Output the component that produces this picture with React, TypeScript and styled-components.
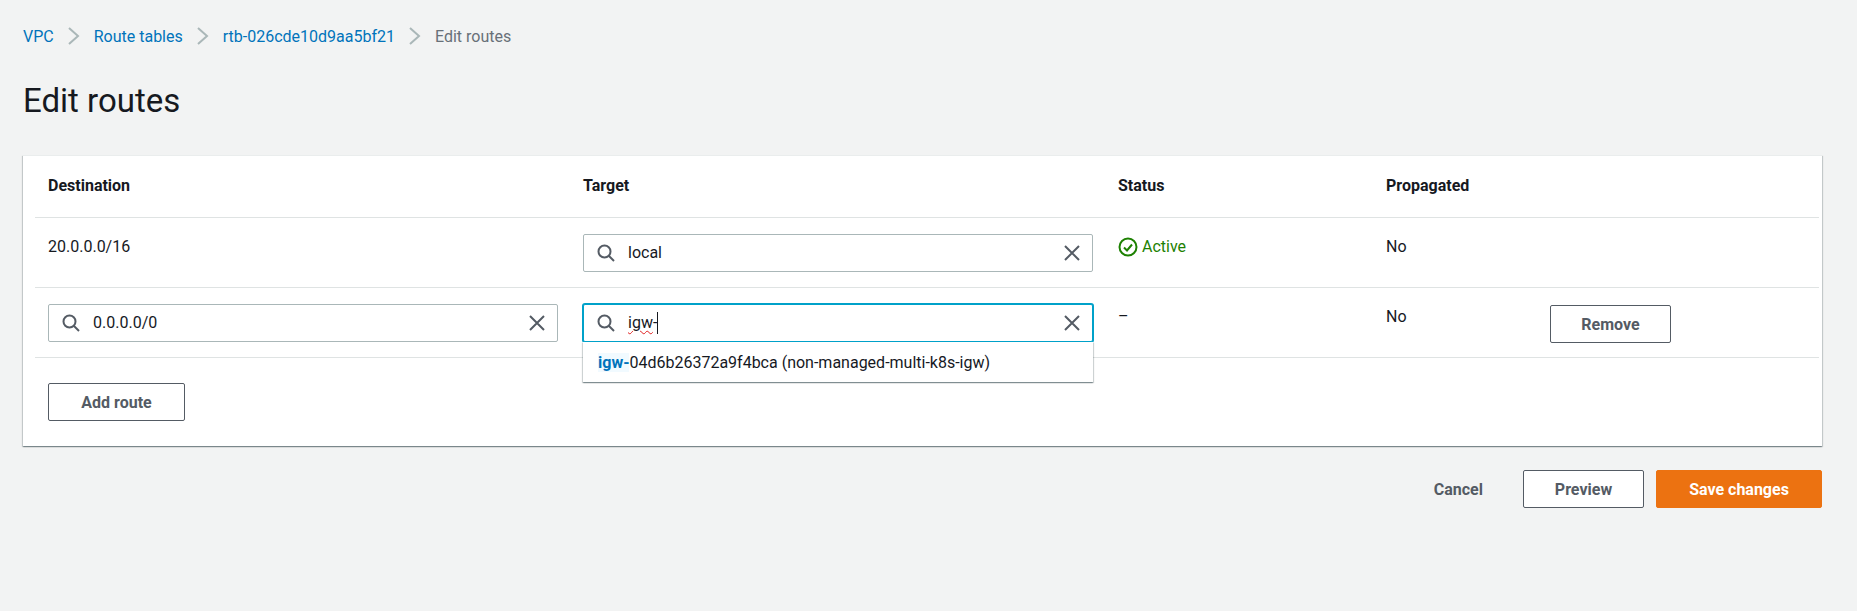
import styled, { createGlobalStyle } from 'styled-components';

const GlobalStyle = createGlobalStyle`
  html, body {
    margin: 0;
    padding: 0;
    background: #f2f3f3;
    color: #16191f;
    font-family: Roboto, "Liberation Sans", sans-serif;
    font-size: 16px;
  }
`;

const Page = styled.div`
  height: 611px;
  padding: 0 35px 0 23px;
  box-sizing: border-box;
  overflow: hidden;
`;

const Crumbs = styled.nav`
  display: flex;
  align-items: center;
  height: 22px;
  padding-top: 25px;
  font-size: 16px;
`;

const CrumbLink = styled.a`
  color: #0073bb;
`;

const CrumbCurrent = styled.span`
  color: #687078;
`;

const CrumbSep = styled.svg`
  width: 16px;
  height: 20px;
  margin: 0 12px;
  fill: none;
  stroke: #aab7b8;
  stroke-width: 2;
`;

const Title = styled.h1`
  margin: 28px 0 0;
  height: 56px;
  font-size: 33px;
  line-height: 52px;
  font-weight: 400;
  color: #16191f;
`;

const Panel = styled.section`
  margin-top: 24px;
  height: 291px;
  padding: 0 3px 0 12px;
  box-sizing: border-box;
  background: #fff;
  border-top: 1px solid #eaeded;
  box-shadow: 0 1px 1px 0 rgba(0, 28, 36, 0.3), 1px 1px 1px 0 rgba(0, 28, 36, 0.15),
    -1px 1px 1px 0 rgba(0, 28, 36, 0.15);
`;

const Row = styled.div<{ $height: number }>`
  display: grid;
  grid-template-columns: 535px 535px 268px 177px 1fr;
  height: ${(p) => p.$height}px;
  box-sizing: border-box;
  border-bottom: 1px solid #dfe3e3;
`;

const Cell = styled.div`
  padding: 18px 0 0 13px;
  line-height: 22px;
  position: relative;
`;

const HeadCell = styled.div`
  padding: 19px 0 0 13px;
  line-height: 22px;
  font-weight: 700;
`;

const Field = styled.div<{ $focused?: boolean }>`
  display: flex;
  align-items: center;
  width: 510px;
  height: 38px;
  margin-top: 0;
  box-sizing: border-box;
  padding: 0 10px 0 12px;
  background: #fff;
  border: 1px solid ${(p) => (p.$focused ? '#00a1c9' : '#aab7b8')};
  border-radius: 2px;
  box-shadow: ${(p) => (p.$focused ? '0 0 0 1px #00a1c9' : 'none')};
`;

const FieldCell = styled.div`
  padding: 16px 0 0 13px;
  position: relative;
`;

const FieldIcon = styled.svg`
  width: 20px;
  height: 20px;
  flex: none;
  fill: none;
  stroke: #545b64;
  stroke-width: 2;
`;

const FieldValue = styled.div`
  flex: 1;
  margin-left: 12px;
  line-height: 22px;
  display: flex;
  align-items: center;
`;

const Misspelled = styled.span`
  text-decoration: underline wavy #e02020 1px;
  text-underline-offset: 2px;
`;

const Caret = styled.span`
  display: inline-block;
  width: 1px;
  height: 22px;
  background: #16191f;
`;

const Dropdown = styled.div`
  position: absolute;
  left: 13px;
  top: 54px;
  width: 510px;
  height: 40px;
  box-sizing: border-box;
  padding: 0 0 0 15px;
  display: flex;
  align-items: center;
  background: #fff;
  z-index: 2;
  box-shadow: 0 1px 1px 0 rgba(0, 28, 36, 0.3), 1px 1px 1px 0 rgba(0, 28, 36, 0.15),
    -1px 1px 1px 0 rgba(0, 28, 36, 0.15);
`;

const Match = styled.span`
  color: #0073bb;
  font-weight: 700;
  background: #f1faff;
`;

const Status = styled.span`
  display: inline-flex;
  align-items: center;
  gap: 4px;
  color: #1d8102;
`;

const StatusIcon = styled.svg`
  width: 20px;
  height: 20px;
  fill: none;
  stroke: #1d8102;
  stroke-width: 2;
`;

const Button = styled.button<{ $primary?: boolean; $width: number }>`
  width: ${(p) => p.$width}px;
  height: 38px;
  padding: 0;
  box-sizing: border-box;
  border: 1px solid ${(p) => (p.$primary ? '#ec7211' : '#545b64')};
  border-radius: 2px;
  background: ${(p) => (p.$primary ? '#ec7211' : '#fff')};
  color: ${(p) => (p.$primary ? '#fff' : '#545b64')};
  font: 700 16px Roboto, "Liberation Sans", sans-serif;
`;

const RemoveCell = styled.div`
  padding-top: 17px;
`;

const AddRow = styled.div`
  padding: 25px 0 0 13px;
`;

const Footer = styled.div`
  display: flex;
  justify-content: flex-end;
  align-items: center;
  gap: 12px;
  margin-top: 24px;
`;

const CancelLink = styled.span`
  margin-right: 28px;
  font-weight: 700;
  color: #545b64;
`;

const Chevron = () => (
  <CrumbSep viewBox="0 0 16 20">
    <path d="M3 2l9 8-9 8" />
  </CrumbSep>
);

const SearchIcon = () => (
  <FieldIcon viewBox="0 0 20 20">
    <circle cx="8.5" cy="8.5" r="6" />
    <path d="M13 13l5 5" />
  </FieldIcon>
);

const ClearIcon = () => (
  <FieldIcon viewBox="0 0 20 20" strokeWidth="2.4">
    <path d="M3 3l14 14M17 3L3 17" />
  </FieldIcon>
);

export default function App() {
  return (
    <Page>
      <GlobalStyle />
      <Crumbs>
        <CrumbLink>VPC</CrumbLink>
        <Chevron />
        <CrumbLink>Route tables</CrumbLink>
        <Chevron />
        <CrumbLink>rtb-026cde10d9aa5bf21</CrumbLink>
        <Chevron />
        <CrumbCurrent>Edit routes</CrumbCurrent>
      </Crumbs>
      <Title>Edit routes</Title>

      <Panel>
        <Row $height={62}>
          <HeadCell>Destination</HeadCell>
          <HeadCell>Target</HeadCell>
          <HeadCell>Status</HeadCell>
          <HeadCell>Propagated</HeadCell>
          <HeadCell />
        </Row>
        <Row $height={70}>
          <Cell>20.0.0.0/16</Cell>
          <FieldCell>
            <Field>
              <SearchIcon />
              <FieldValue>local</FieldValue>
              <ClearIcon />
            </Field>
          </FieldCell>
          <Cell>
            <Status>
              <StatusIcon viewBox="0 0 20 20">
                <circle cx="10" cy="10" r="8.5" />
                <path d="M6 10.5l3 3 5-6" />
              </StatusIcon>
              Active
            </Status>
          </Cell>
          <Cell>No</Cell>
          <Cell />
        </Row>
        <Row $height={70}>
          <FieldCell>
            <Field>
              <SearchIcon />
              <FieldValue>0.0.0.0/0</FieldValue>
              <ClearIcon />
            </Field>
          </FieldCell>
          <FieldCell>
            <Field $focused>
              <SearchIcon />
              <FieldValue>
                <Misspelled>igw</Misspelled>-<Caret />
              </FieldValue>
              <ClearIcon />
            </Field>
            <Dropdown>
              <Match>igw-</Match>04d6b26372a9f4bca (non-managed-multi-k8s-igw)
            </Dropdown>
          </FieldCell>
          <Cell>–</Cell>
          <Cell>No</Cell>
          <RemoveCell>
            <Button $width={121}>Remove</Button>
          </RemoveCell>
        </Row>
        <AddRow>
          <Button $width={137}>Add route</Button>
        </AddRow>
      </Panel>

      <Footer>
        <CancelLink>Cancel</CancelLink>
        <Button $width={121}>Preview</Button>
        <Button $primary $width={166}>Save changes</Button>
      </Footer>
    </Page>
  );
}
